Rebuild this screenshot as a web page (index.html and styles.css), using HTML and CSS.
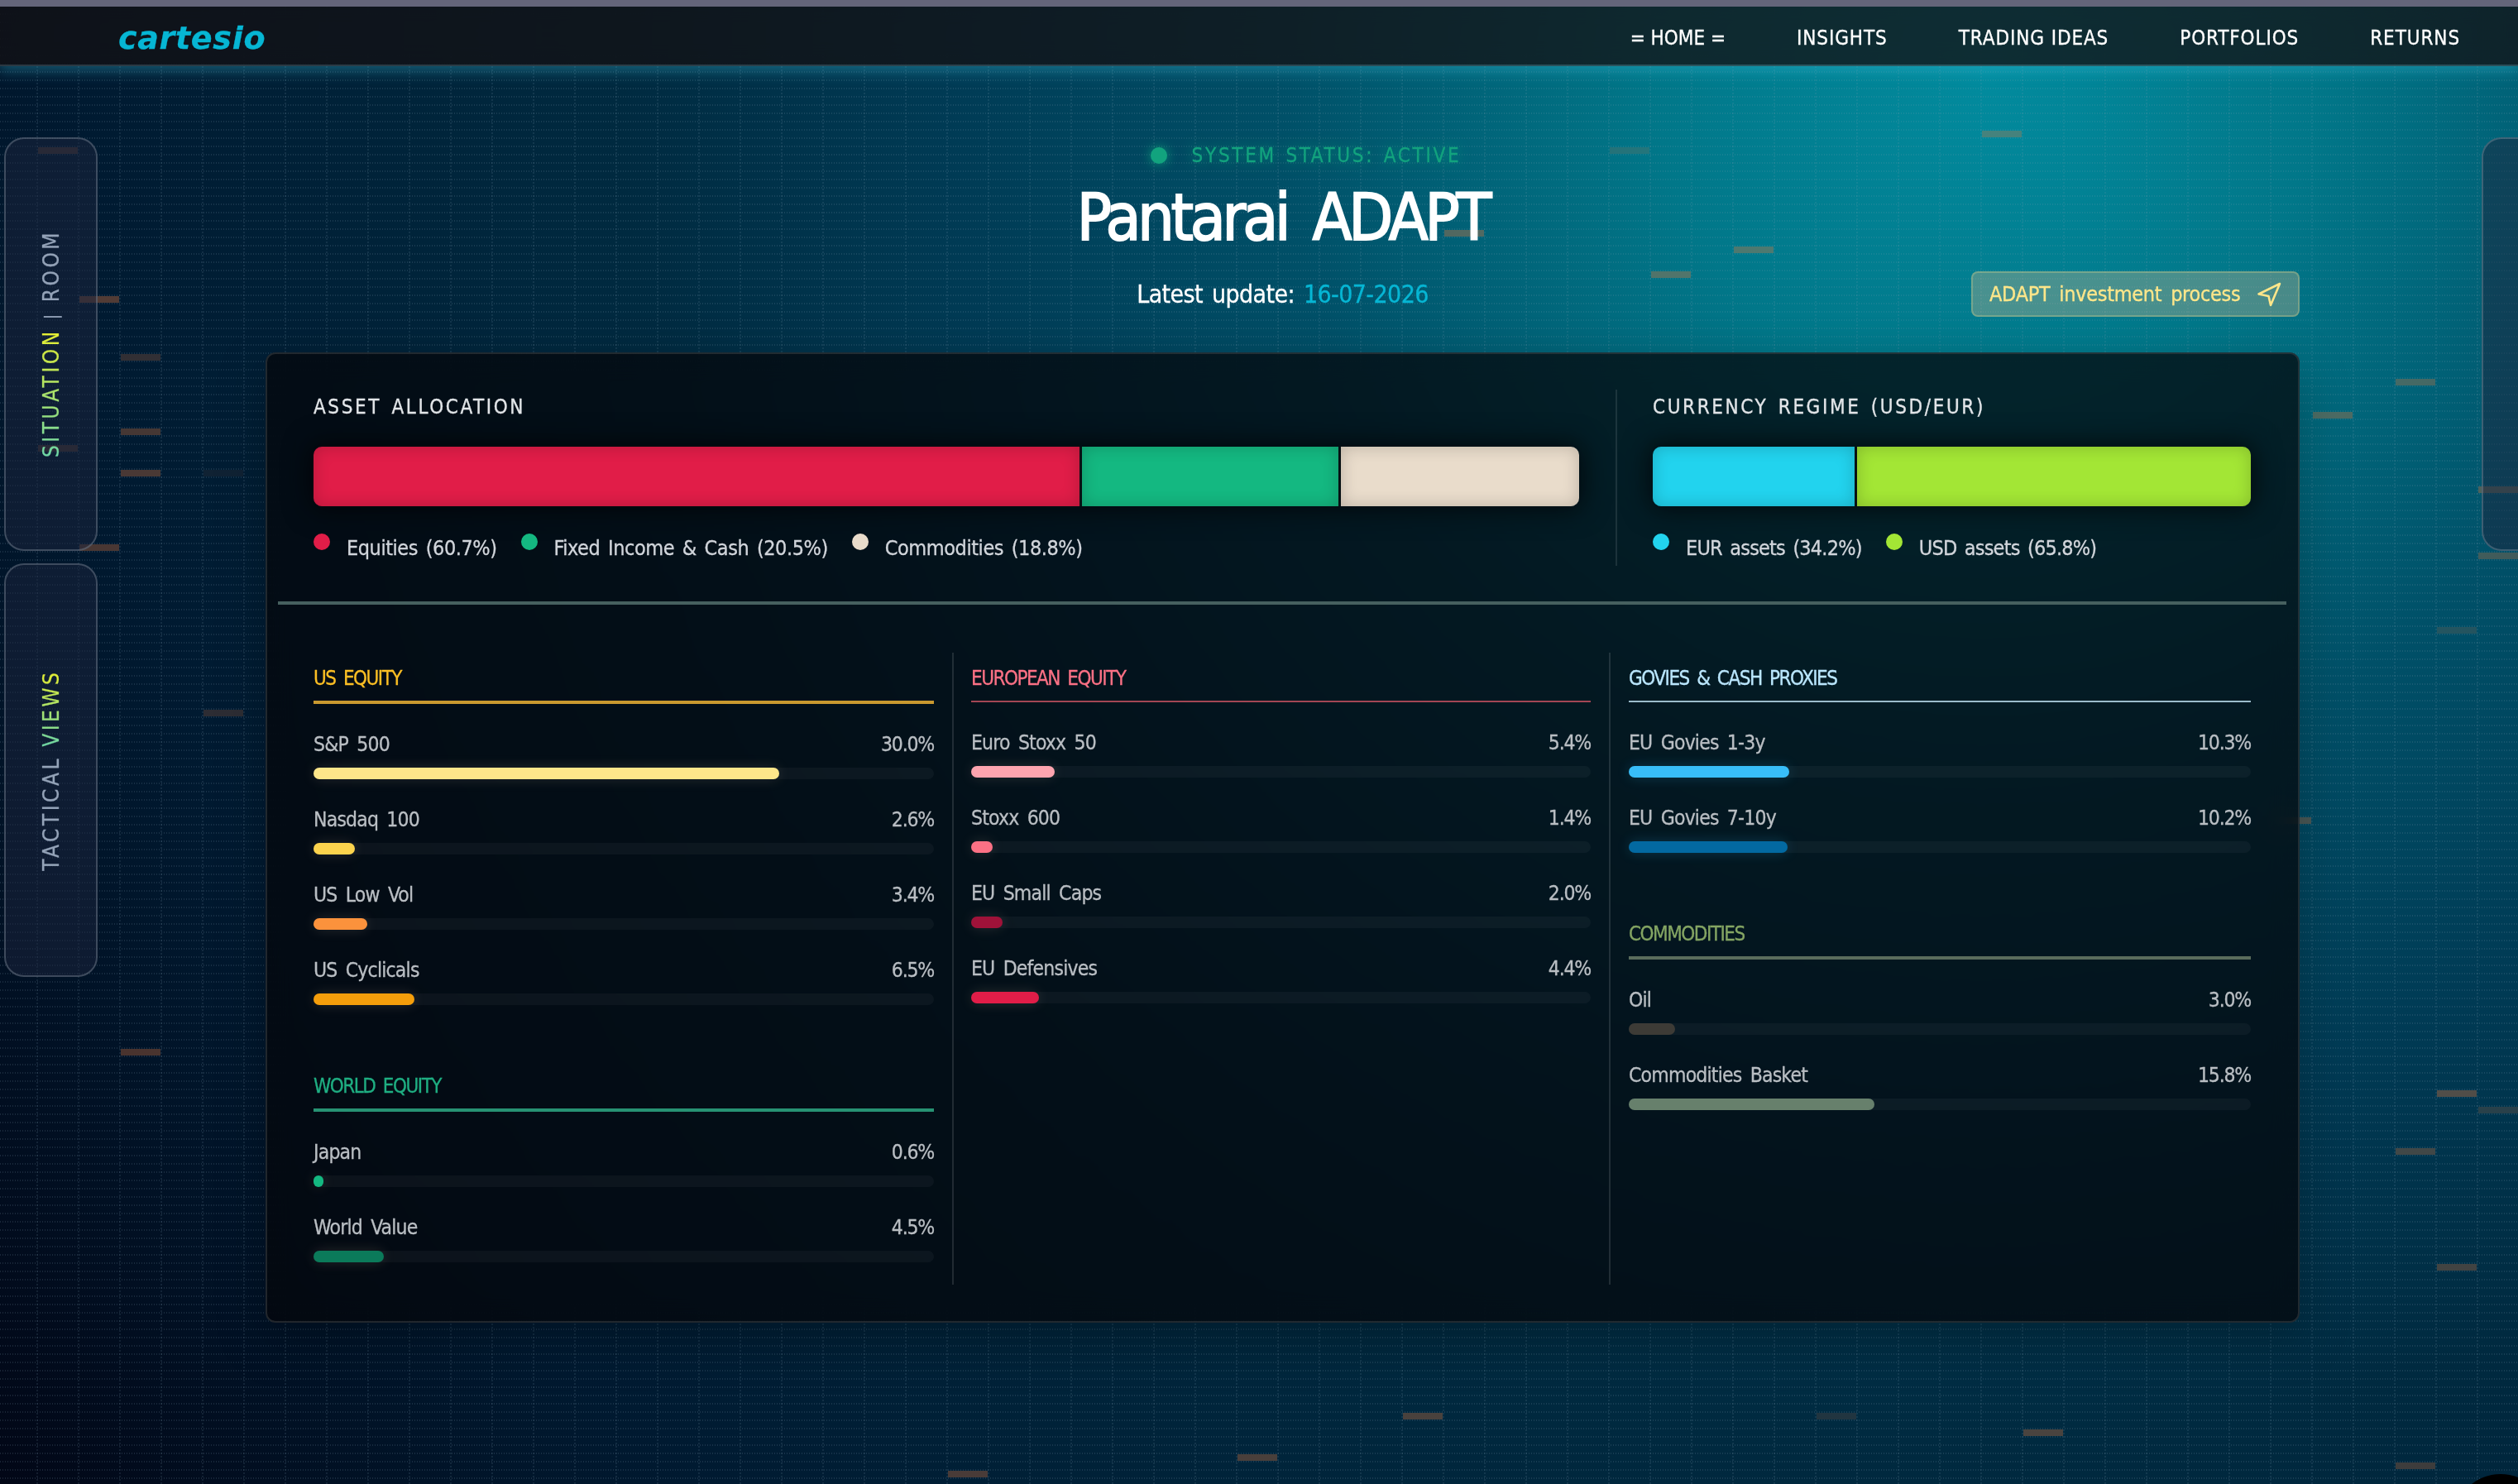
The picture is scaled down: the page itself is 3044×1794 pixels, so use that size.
FILE: index.html
```
<!DOCTYPE html>
<html lang="en">
<head>
    <meta charset="UTF-8">
    <meta name="viewport" content="width=device-width, initial-scale=1.0">
    <title>Pantarai ADAPT | cartesio</title>
    <link rel="stylesheet" href="styles.css">
</head>
<body>
    <div class="bg-rows"></div>
    <div class="bg-cols"></div>
    <div class="blocks" id="blocks"></div>

    <header class="topbar">
        <a class="logo">cartesio</a>
        <nav class="nav">
            <a class="active">= HOME =</a>
            <a>INSIGHTS</a>
            <a>TRADING IDEAS</a>
            <a>PORTFOLIOS</a>
            <a>RETURNS</a>
        </nav>
    </header>

    <!-- Side tabs -->
    <aside class="side side-left">
        <a class="side-tab"><span class="side-text"><span class="hl">SITUATION</span> <span class="sep">|</span> ROOM</span></a>
        <a class="side-tab"><span class="side-text">TACTICAL <span class="hl">VIEWS</span></span></a>
    </aside>
    <aside class="side side-right">
        <a class="side-tab"></a>
    </aside>

    <main class="main">
        <div class="status"><span class="status-dot"></span><span>SYSTEM STATUS: ACTIVE</span></div>
        <h1>Pantarai ADAPT</h1>
        <div class="sub-row">
            <p class="updated">Latest update: <span>16-07-2026</span></p>
            <a class="process-btn">
                <span>ADAPT investment process</span>
                <svg width="30" height="30" viewBox="0 0 30 30" fill="none" stroke="currentColor" stroke-width="2.6" stroke-linejoin="round" stroke-linecap="round"><path d="M28 2 L2.5 14.5 L14.5 17 L17 28 Z"/></svg>
            </a>
        </div>

        <section class="card">
            <div class="summary">
                <div class="summary-block allocation">
                    <h2>ASSET ALLOCATION</h2>
                    <div class="stack">
                        <div class="seg rose" style="width: 60.7%"></div>
                        <div class="seg emerald" style="width: 20.5%"></div>
                        <div class="seg sand" style="width: 18.8%"></div>
                    </div>
                    <div class="legend">
                        <div class="legend-item"><i class="rose"></i><span>Equities (60.7%)</span></div>
                        <div class="legend-item"><i class="emerald"></i><span>Fixed Income &amp; Cash (20.5%)</span></div>
                        <div class="legend-item"><i class="sand"></i><span>Commodities (18.8%)</span></div>
                    </div>
                </div>
                <div class="summary-block currency">
                    <h2>CURRENCY REGIME (USD/EUR)</h2>
                    <div class="stack">
                        <div class="seg cyan" style="width: 34.2%"></div>
                        <div class="seg lime" style="width: 65.8%"></div>
                    </div>
                    <div class="legend">
                        <div class="legend-item"><i class="cyan"></i><span>EUR assets (34.2%)</span></div>
                        <div class="legend-item"><i class="lime"></i><span>USD assets (65.8%)</span></div>
                    </div>
                </div>
            </div>

            <hr class="divider">

            <div class="columns">
                <div class="column">
                    <div class="group us">
                        <h3>US EQUITY</h3>
                        <div class="item">
                            <div class="item-head"><span>S&amp;P 500</span><b>30.0%</b></div>
                            <div class="track"><div class="fill yellow-200" style="width: 75%"></div></div>
                        </div>
                        <div class="item">
                            <div class="item-head"><span>Nasdaq 100</span><b>2.6%</b></div>
                            <div class="track"><div class="fill yellow-400" style="width: 6.6%"></div></div>
                        </div>
                        <div class="item">
                            <div class="item-head"><span>US Low Vol</span><b>3.4%</b></div>
                            <div class="track"><div class="fill orange-400" style="width: 8.6%"></div></div>
                        </div>
                        <div class="item">
                            <div class="item-head"><span>US Cyclicals</span><b>6.5%</b></div>
                            <div class="track"><div class="fill amber-500" style="width: 16.25%"></div></div>
                        </div>
                    </div>
                    <div class="group world">
                        <h3>WORLD EQUITY</h3>
                        <div class="item">
                            <div class="item-head"><span>Japan</span><b>0.6%</b></div>
                            <div class="track"><div class="fill emerald" style="width: 1.6%"></div></div>
                        </div>
                        <div class="item">
                            <div class="item-head"><span>World Value</span><b>4.5%</b></div>
                            <div class="track"><div class="fill emerald-700" style="width: 11.3%"></div></div>
                        </div>
                    </div>
                </div>

                <div class="column">
                    <div class="group europe">
                        <h3>EUROPEAN EQUITY</h3>
                        <div class="item">
                            <div class="item-head"><span>Euro Stoxx 50</span><b>5.4%</b></div>
                            <div class="track"><div class="fill rose-300" style="width: 13.5%"></div></div>
                        </div>
                        <div class="item">
                            <div class="item-head"><span>Stoxx 600</span><b>1.4%</b></div>
                            <div class="track"><div class="fill rose-400" style="width: 3.5%"></div></div>
                        </div>
                        <div class="item">
                            <div class="item-head"><span>EU Small Caps</span><b>2.0%</b></div>
                            <div class="track"><div class="fill rose-800" style="width: 5.1%"></div></div>
                        </div>
                        <div class="item">
                            <div class="item-head"><span>EU Defensives</span><b>4.4%</b></div>
                            <div class="track"><div class="fill rose" style="width: 11%"></div></div>
                        </div>
                    </div>
                </div>

                <div class="column">
                    <div class="group govies">
                        <h3>GOVIES &amp; CASH PROXIES</h3>
                        <div class="item">
                            <div class="item-head"><span>EU Govies 1-3y</span><b>10.3%</b></div>
                            <div class="track"><div class="fill sky-400" style="width: 25.75%"></div></div>
                        </div>
                        <div class="item">
                            <div class="item-head"><span>EU Govies 7-10y</span><b>10.2%</b></div>
                            <div class="track"><div class="fill sky-700" style="width: 25.5%"></div></div>
                        </div>
                    </div>
                    <div class="group commodities">
                        <h3>COMMODITIES</h3>
                        <div class="item">
                            <div class="item-head"><span>Oil</span><b>3.0%</b></div>
                            <div class="track"><div class="fill stone" style="width: 7.5%"></div></div>
                        </div>
                        <div class="item">
                            <div class="item-head"><span>Commodities Basket</span><b>15.8%</b></div>
                            <div class="track"><div class="fill sage" style="width: 39.5%"></div></div>
                        </div>
                    </div>
                </div>
            </div>
        </section>
    </main>

    <div class="corner"><div class="chat-bubble"></div></div>

    <script>
        // lit cells of the background grid: [column, top, opacity]
        const cells = [
            [0, 178, .65], [1, 358, 1], [2, 428, .6], [2, 518, .85], [2, 568, .9], [4, 568, .2],
            [0, 538, .65], [1, 658, .9], [4, 858, .55], [2, 1268, .9], [22, 1778, .9], [29, 1758, .9],
            [33, 1708, .9], [43, 1708, .4], [48, 1728, .9], [57, 1768, .75], [58, 1528, .8],
            [57, 1388, .8], [58, 1318, 1], [59, 1338, .5], [58, 758, .45], [55, 498, .95],
            [57, 458, .85], [59, 588, .95], [59, 668, .8], [47, 158, .85], [38, 178, .45],
            [41, 298, .95], [39, 328, 1], [34, 278, 1], [54, 988, .9]
        ];
        const wrap = document.getElementById('blocks');
        cells.forEach(([col, top, alpha]) => {
            const el = document.createElement('div');
            el.className = 'block';
            el.style.left = (46 + col * 50) + 'px';
            el.style.top = top + 'px';
            el.style.opacity = alpha;
            wrap.appendChild(el);
        });
    </script>
</body>
</html>
```
FILE: styles.css
```
* {
    margin: 0;
    padding: 0;
    box-sizing: border-box;
}

html {
    overflow: hidden;
}

body {
    font-family: 'DejaVu Sans Condensed', 'DejaVu Sans', sans-serif;
    font-size: 24px;
    line-height: 30px;
    color: #fff;
    -webkit-text-stroke: 0.3px;
    height: 100vh;
    overflow: hidden;
    position: relative;
    background: radial-gradient(circle at 2400px 90px, #028b9e 0, #017789 400px, #005068 850px, #003b55 1250px, #002a40 1650px, #001a31 2300px, #020514 3000px);
}

/* ---------- background ---------- */
.bg-rows,
.bg-cols,
.blocks {
    position: absolute;
    inset: 0;
    overflow: hidden;
}

.bg-rows {
    background: repeating-linear-gradient(90deg, rgba(130, 160, 180, 0.19) 0 1.5px, transparent 1.5px 3px);
    -webkit-mask-image: repeating-linear-gradient(180deg, transparent 0 6px, #000 6px 8px, transparent 8px 10px);
    mask-image: repeating-linear-gradient(180deg, transparent 0 6px, #000 6px 8px, transparent 8px 10px);
}

.bg-cols {
    background: repeating-linear-gradient(180deg, rgba(130, 160, 180, 0.14) 0 2px, transparent 2px 4px);
    -webkit-mask-image: repeating-linear-gradient(90deg, transparent 0 44px, #000 44px 46px, transparent 46px 50px);
    mask-image: repeating-linear-gradient(90deg, transparent 0 44px, #000 44px 46px, transparent 46px 50px);
}

.block {
    position: absolute;
    width: 48px;
    height: 8px;
    background: rgba(225, 120, 60, 0.36);
}

/* ---------- header ---------- */
.topbar {
    position: relative;
    height: 80px;
    border-top: 8px solid #64657a;
    border-bottom: 2px solid rgba(60, 70, 76, 0.7);
    background: rgba(18, 16, 18, 0.76);
    background-clip: padding-box;
    backdrop-filter: blur(12px);
    box-shadow: 0 4px 16px 2px rgba(60, 200, 230, 0.35);
    display: flex;
    align-items: center;
    justify-content: space-between;
    padding: 5px 70px 0 143px;
}

.logo {
    font-family: 'DejaVu Sans', sans-serif;
    font-size: 38px;
    font-weight: bold;
    font-style: italic;
    letter-spacing: 0.7px;
    color: #06b6d4;
}

.nav {
    display: flex;
    gap: 86px;
    letter-spacing: 0.9px;
}

.nav .active {
    letter-spacing: 0;
}

/* ---------- side tabs ---------- */
.side {
    position: absolute;
    top: 166px;
    display: flex;
    flex-direction: column;
    gap: 15px;
}

.side-left {
    left: 5px;
}

.side-right {
    right: 0;
    width: 44px;
    overflow: hidden;
}

.side-tab {
    width: 113px;
    height: 500px;
    border: 2px solid rgba(148, 163, 175, 0.35);
    border-radius: 24px;
    background: rgba(28, 36, 60, 0.5);
    display: flex;
    align-items: center;
    justify-content: center;
}

.side-text {
    writing-mode: vertical-rl;
    transform: rotate(180deg);
    font-size: 26px;
    letter-spacing: 3.5px;
    color: #94a3b8;
    white-space: nowrap;
}

.side-text .hl {
    background: linear-gradient(180deg, #6ed8a8, #e8ee2e);
    -webkit-background-clip: text;
    background-clip: text;
    color: transparent;
}

.side-text .sep {
    font-size: 22px;
}

/* ---------- page title ---------- */
.main {
    position: relative;
    padding: 93px 264px 0 321px;
}

.status {
    display: flex;
    align-items: center;
    justify-content: center;
    gap: 30px;
    padding-left: 56px;
    letter-spacing: 2.7px;
    word-spacing: 2px;
    color: #12a37e;
    text-shadow: 0 0 16px rgba(16, 185, 129, 0.7);
}

.status-dot {
    width: 20px;
    height: 20px;
    border-radius: 50%;
    background: #12a37e;
    box-shadow: 0 0 14px rgba(16, 185, 129, 0.7);
}

h1 {
    margin-top: 20px;
    font-size: 78px;
    line-height: 80px;
    font-weight: normal;
    text-align: center;
    letter-spacing: -4.2px;
    word-spacing: 12px;
    -webkit-text-stroke: 1.8px #fff;
}

.sub-row {
    margin-top: 25px;
    height: 55px;
    display: grid;
    grid-template-columns: 1fr auto 1fr;
    align-items: center;
}

.updated {
    grid-column: 2;
    font-size: 30px;
    letter-spacing: -0.6px;
    word-spacing: 3px;
}

.updated span {
    color: #06b6d4;
}

.process-btn {
    justify-self: end;
    width: 397px;
    height: 55px;
    display: flex;
    align-items: center;
    justify-content: space-between;
    padding: 0 20px;
    border: 2px solid rgba(253, 230, 138, 0.25);
    border-radius: 8px;
    background: rgba(200, 180, 140, 0.36);
    color: #fde68a;
    font-size: 25px;
    letter-spacing: -0.3px;
    word-spacing: 4px;
}

/* ---------- card ---------- */
.card {
    margin-top: 43px;
    height: 1173px;
    border: 2px solid rgba(70, 75, 80, 0.45);
    border-radius: 12px;
    background: rgba(4, 5, 9, 0.74);
    backdrop-filter: blur(16px);
    box-shadow: 0 20px 60px rgba(0, 0, 0, 0.25);
    padding-top: 43px;
}

.summary {
    display: flex;
    margin: 0 57px 0 56px;
}

.summary-block {
    padding: 6px 0;
}

.allocation {
    width: 1530px;
    margin-right: 44px;
}

.currency {
    flex: 1;
    padding-left: 43px;
    border-left: 2px solid rgba(255, 255, 255, 0.1);
}

h2 {
    font-size: 24px;
    font-weight: normal;
    letter-spacing: 2.6px;
    word-spacing: 3px;
    color: #e2e5e8;
}

.stack {
    margin-top: 33px;
    height: 72px;
    display: flex;
    border-radius: 10px;
    overflow: hidden;
    box-shadow: 0 0 30px 6px rgba(0, 0, 0, 0.6);
}

.seg {
    box-shadow: inset 0 0 20px rgba(0, 0, 0, 0.2);
}

.seg:not(:last-child) {
    border-right: 3px solid #071013;
}

.legend {
    margin-top: 36px;
    display: flex;
    gap: 29px;
    font-size: 25px;
    letter-spacing: -0.45px;
    word-spacing: 3px;
    color: #d1d5db;
}

.currency .legend {
    letter-spacing: -0.8px;
}

.legend-item {
    display: flex;
    align-items: flex-start;
    gap: 20px;
}

.legend-item i {
    width: 20px;
    height: 20px;
    margin-top: -3px;
    border-radius: 50%;
}

.divider {
    height: 4px;
    margin: 43px 14px 0 13px;
    border: none;
    background: #46605f;
}

.columns {
    margin: 58px 33px 0 34px;
    height: 764px;
    display: grid;
    grid-template-columns: 794px 794px 1fr;
}

.column {
    padding: 16px 22px 0;
}

.column + .column {
    border-left: 2px solid rgba(255, 255, 255, 0.12);
    padding-left: 21px;
}

.column:last-child {
    padding-left: 22px;
    padding-right: 24px;
}

.group + .group {
    margin-top: 83px;
}

h3 {
    padding-bottom: 12px;
    margin-bottom: 34px;
    font-size: 24px;
    font-weight: normal;
    letter-spacing: -1.5px;
    word-spacing: 4px;
    border-bottom: 4px solid;
}

.us h3 {
    color: #fbbf24;
    border-color: #c9992f;
}

.world h3 {
    color: #1fae82;
    border-color: #279273;
}

.europe h3 {
    color: #fb7185;
    border-bottom: 2px solid #a34654;
}

.govies h3 {
    color: #bae6fd;
    border-bottom: 2px solid #9bbccb;
}

.commodities h3 {
    color: #84a563;
    border-color: #5a6c5c;
}

.item + .item {
    margin-top: 34px;
}

.item-head {
    display: flex;
    justify-content: space-between;
    font-size: 24.5px;
    letter-spacing: -0.8px;
    word-spacing: 4px;
    color: #b9bec3;
}

.item-head b {
    font-weight: normal;
    letter-spacing: -1.2px;
}

.track {
    margin-top: 13px;
    height: 14px;
    border-radius: 7px;
    background: rgba(255, 255, 255, 0.04);
}

.fill {
    height: 100%;
    border-radius: 7px;
    box-shadow: 0 0 16px rgba(255, 220, 180, 0.15);
}

/* ---------- palette ---------- */
.rose { background-color: #e11d48; }
.rose-300 { background-color: #fda4af; }
.rose-400 { background-color: #fb7185; }
.rose-800 { background-color: #9f1239; }
.emerald { background-color: #14b881; }
.emerald-700 { background-color: #0b7a5a; }
.sand { background-color: #e9dccb; }
.cyan { background-color: #22d3ee; }
.lime { background-color: #a3e635; }
.yellow-200 { background-color: #fde68a; }
.yellow-400 { background-color: #fcd34d; }
.orange-400 { background-color: #fb923c; }
.amber-500 { background-color: #f59e0b; }
.sky-400 { background-color: #38bdf8; }
.sky-700 { background-color: #0369a1; }
.stone { background-color: #3d3b36; }
.sage { background-color: #67806c; }

.fill.sky-400,
.fill.sky-700 {
    box-shadow: 0 0 16px rgba(56, 189, 248, 0.2);
}

.fill.stone,
.fill.sage {
    box-shadow: none;
}

/* only the top of the bubble shows in the corner */
.corner {
    position: absolute;
    right: 0;
    bottom: 0;
    width: 78px;
    height: 12px;
    overflow: hidden;
}

.chat-bubble {
    width: 114px;
    height: 114px;
    border-radius: 50%;
    background: #000;
}
```
